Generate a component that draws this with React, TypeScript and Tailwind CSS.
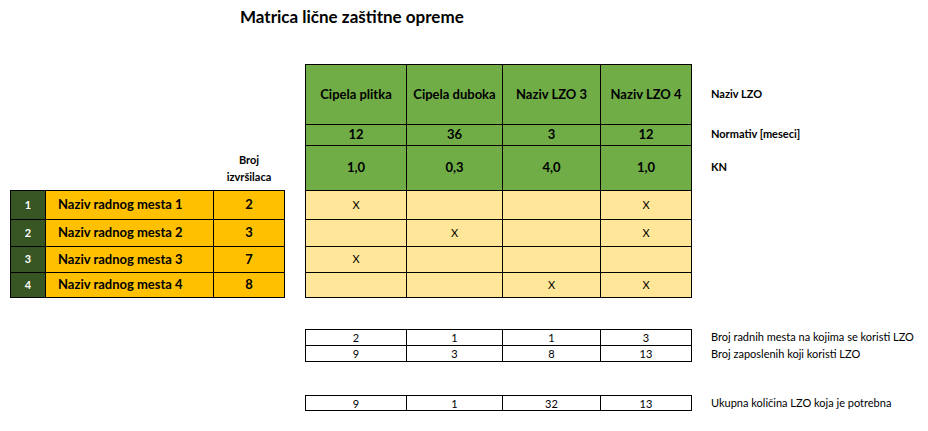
const cols = ['Cipela plitka', 'Cipela duboka', 'Naziv LZO 3', 'Naziv LZO 4']
const normativ = ['12', '36', '3', '12']
const kn = ['1,0', '0,3', '4,0', '1,0']

const places = [
  { n: 1, name: 'Naziv radnog mesta 1', count: 2, marks: [true, false, false, true], h: 'h-[28px]' },
  { n: 2, name: 'Naziv radnog mesta 2', count: 3, marks: [false, true, false, true], h: 'h-[26px]' },
  { n: 3, name: 'Naziv radnog mesta 3', count: 7, marks: [true, false, false, false], h: 'h-[25px]' },
  { n: 4, name: 'Naziv radnog mesta 4', count: 8, marks: [false, false, true, true], h: 'h-[24px]' },
]

const summary = [
  { values: ['2', '1', '1', '3'], label: 'Broj radnih mesta na kojima se koristi LZO' },
  { values: ['9', '3', '8', '13'], label: 'Broj zaposlenih koji koristi LZO' },
]
const total = { values: ['9', '1', '32', '13'], label: 'Ukupna količina LZO koja je potrebna' }

const gridCols = 'grid grid-cols-[100px_95px_97px_90px] gap-px bg-black p-px w-[387px]'

function ValueRow({ values, h }: { values: string[]; h: string }) {
  return (
    <>
      {values.map((v, i) => (
        <div key={i} className={`${h} bg-white flex items-center justify-center text-[11px] leading-none`}>
          {v}
        </div>
      ))}
    </>
  )
}

export default function App() {
  return (
    <div className="w-[928px] h-[431px] bg-white text-black font-['Lato',sans-serif] overflow-hidden">
      {/* Title */}
      <h1 className="h-[64px] pl-[240px] pt-[6px] text-[17px] leading-[22px] font-bold">
        Matrica lične zaštitne opreme
      </h1>

      <div className="flex pl-[10px]">
        {/* Workplaces */}
        <div className="w-[275px] flex flex-col">
          <div className="h-[126px] flex items-end justify-end pb-[5px]">
            <div className="w-[72px] text-center text-[11px] leading-[17px] font-bold">
              Broj
              <br />
              izvršilaca
            </div>
          </div>
          <div className="grid grid-cols-[34px_167px_70px] gap-px bg-black p-px">
            {places.map((p) => (
              <div key={p.n} className="contents">
                <div className={`${p.h} bg-[#375623] text-white text-[11px] font-bold flex items-center justify-center`}>
                  {p.n}
                </div>
                <div className={`${p.h} bg-[#ffc000] text-[13px] font-bold flex items-center pl-[12px]`}>
                  {p.name}
                </div>
                <div className={`${p.h} bg-[#ffc000] text-[13px] font-bold flex items-center justify-center`}>
                  {p.count}
                </div>
              </div>
            ))}
          </div>
        </div>

        {/* Matrix */}
        <div className="ml-[20px] flex flex-col">
          <div className="flex">
            <div className={gridCols}>
              {cols.map((c) => (
                <div key={c} className="h-[59px] bg-[#70ad47] text-[13px] font-bold flex items-center justify-center whitespace-nowrap">
                  {c}
                </div>
              ))}
              {normativ.map((v, i) => (
                <div key={i} className="h-[20px] bg-[#70ad47] text-[13px] font-bold flex items-center justify-center">
                  {v}
                </div>
              ))}
              {kn.map((v, i) => (
                <div key={i} className="h-[44px] bg-[#70ad47] text-[13px] font-bold flex items-center justify-center">
                  {v}
                </div>
              ))}
              {places.map((p) =>
                p.marks.map((m, i) => (
                  <div key={`${p.n}-${i}`} className={`${p.h} bg-[#ffe699] text-[11px] flex items-center justify-center`}>
                    {m ? 'X' : ''}
                  </div>
                ))
              )}
            </div>
            <div className="ml-[19px] flex flex-col text-[11px] font-bold">
              <div className="h-[60px] flex items-center">Naziv LZO</div>
              <div className="h-[21px] flex items-center">Normativ [meseci]</div>
              <div className="h-[45px] flex items-center">KN</div>
            </div>
          </div>

          {/* Summary */}
          <div className="flex mt-[31px]">
            <div className={gridCols}>
              {summary.map((s, i) => (
                <ValueRow key={i} values={s.values} h="h-[15px]" />
              ))}
            </div>
            <div className="ml-[19px] flex flex-col text-[11px]">
              <div className="h-[17px] flex items-center">{summary[0].label}</div>
              <div className="h-[16px] flex items-center">{summary[1].label}</div>
            </div>
          </div>

          <div className="flex mt-[33px]">
            <div className={gridCols}>
              <ValueRow values={total.values} h="h-[14px]" />
            </div>
            <div className="ml-[19px] h-[16px] flex items-center text-[11px]">{total.label}</div>
          </div>
        </div>
      </div>
    </div>
  )
}
